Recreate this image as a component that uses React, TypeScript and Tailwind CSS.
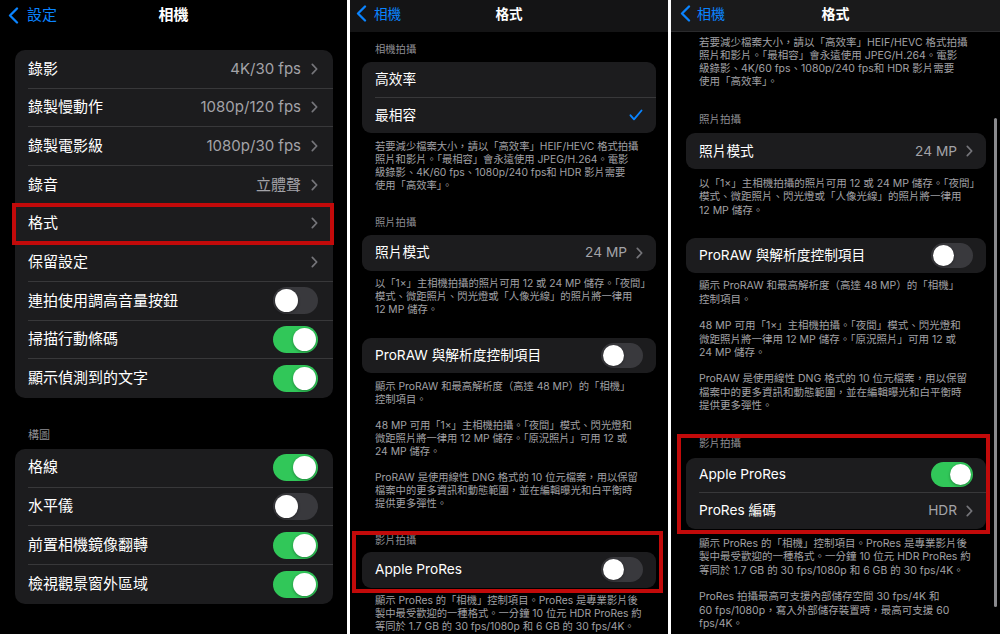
import clsx from "clsx";

type Size = "lg" | "md";

function Chevron() {
  return (
    <svg width="7" height="12" viewBox="0 0 7 12" fill="none" className="shrink-0">
      <path d="M1.3 1.3 5.7 6l-4.4 4.7" stroke="#75757a" strokeWidth="1.7" strokeLinecap="round" strokeLinejoin="round" />
    </svg>
  );
}

function BackChevron() {
  return (
    <svg width="11" height="17" viewBox="0 0 11 17" fill="none" className="shrink-0">
      <path d="M9 1.5 2 8.5l7 7" stroke="#0a84ff" strokeWidth="2.3" strokeLinecap="round" strokeLinejoin="round" />
    </svg>
  );
}

function Check() {
  return (
    <svg width="14" height="12" viewBox="0 0 14 12" fill="none" className="shrink-0">
      <path d="M1.5 6.3 5 10.3 12.5 1.5" stroke="#0a84ff" strokeWidth="1.9" strokeLinecap="round" strokeLinejoin="round" />
    </svg>
  );
}

function Toggle({ on, size }: { on: boolean; size: Size }) {
  return (
    <div
      className={clsx(
        "flex shrink-0 items-center rounded-full p-[2px]",
        on ? "justify-end bg-[#31c759]" : "justify-start bg-[#39393d]",
        size === "lg" ? "h-[27px] w-[45px]" : "h-[25px] w-[42px]"
      )}
    >
      <div
        className={clsx(
          "rounded-full bg-white shadow-[0_1px_3px_rgba(0,0,0,0.35)]",
          size === "lg" ? "h-[23px] w-[23px]" : "h-[21px] w-[21px]"
        )}
      />
    </div>
  );
}

type RowProps = {
  label: string;
  value?: string;
  chevron?: boolean;
  toggle?: boolean;
  check?: boolean;
  divider?: boolean;
  highlight?: boolean;
  size: Size;
};

function Row({ label, value, chevron, toggle, check, divider, highlight, size }: RowProps) {
  const lg = size === "lg";
  return (
    <div className="relative pl-[13px]">
      <div
        className={clsx(
          "flex items-center",
          lg ? "h-[38.67px] pr-[15px] text-[15px]" : "h-[35.5px] pr-[13px] text-[13.7px]",
          divider && "border-b border-[#38383a]"
        )}
      >
        <span className="flex-1 whitespace-nowrap text-white">{label}</span>
        {value && <span className="whitespace-nowrap text-[#a3a3a8]">{value}</span>}
        {chevron && <span className={lg ? "ml-[10px]" : "ml-[9px]"}><Chevron /></span>}
        {typeof toggle === "boolean" && <Toggle on={toggle} size={size} />}
        {check && <Check />}
      </div>
      {highlight && (
        <div className="pointer-events-none absolute -top-[2px] -bottom-[2px] -left-[3px] -right-[1px] border-4 border-[#c20a0a]" />
      )}
    </div>
  );
}

function Card({ rows, size }: { rows: Omit<RowProps, "size" | "divider">[]; size: Size }) {
  return (
    <div className={clsx("bg-[#1c1c1e]", size === "lg" ? "rounded-[10px]" : "rounded-[9px]")}>
      {rows.map((r, i) => (
        <Row key={r.label} {...r} size={size} divider={i < rows.length - 1} />
      ))}
    </div>
  );
}

function Lines({ lines, className }: { lines: string[]; className: string }) {
  return (
    <div className={clsx("pl-[13px] text-[#a0a0a5]", className)}>
      {lines.map((l, i) => (
        <div key={i} className="whitespace-nowrap">{l || "\u00a0"}</div>
      ))}
    </div>
  );
}

function NavBar({ back, title, variant }: { back: string; title: string; variant: 1 | 2 | 3 }) {
  return (
    <div
      className={clsx(
        "grid shrink-0 grid-cols-[1fr_auto_1fr] items-center",
        variant === 1 && "h-[30px] text-[15px]",
        variant === 2 && "h-[32px] bg-[#141415] pb-[4px] text-[13.6px]",
        variant === 3 && "h-[32px] border-b border-[#2a2a2c] bg-[#1a1a1b] pb-[4px] text-[14px]"
      )}
    >
      <div
        className={clsx(
          "flex items-center text-[#0a84ff]",
          variant === 1 && "gap-[8px] pl-[8px]",
          variant === 2 && "gap-[7px] pl-[6px]",
          variant === 3 && "gap-[6px] pl-[9px]"
        )}
      >
        <BackChevron />
        <span>{back}</span>
      </div>
      <div className="font-semibold text-white">{title}</div>
      <div />
    </div>
  );
}

const FORMAT_NOTE = [
  "若要減少檔案大小，請以「高效率」HEIF/HEVC 格式拍攝",
  "照片和影片。「最相容」會永遠使用 JPEG/H.264。電影",
  "級錄影、4K/60 fps、1080p/240 fps和 HDR 影片需要",
  "使用「高效率」。",
];

const PHOTO_NOTE = [
  "以「1×」主相機拍攝的照片可用 12 或 24 MP 儲存。「夜間」",
  "模式、微距照片、閃光燈或「人像光線」的照片將一律用",
  "12 MP 儲存。",
];

const PRORAW_NOTE = [
  "顯示 ProRAW 和最高解析度（高達 48 MP）的「相機」",
  "控制項目。",
  "",
  "48 MP 可用「1×」主相機拍攝。「夜間」模式、閃光燈和",
  "微距照片將一律用 12 MP 儲存。「原況照片」可用 12 或",
  "24 MP 儲存。",
  "",
  "ProRAW 是使用線性 DNG 格式的 10 位元檔案，用以保留",
  "檔案中的更多資訊和動態範圍，並在編輯曝光和白平衡時",
  "提供更多彈性。",
];

const PRORES_NOTE = [
  "顯示 ProRes 的「相機」控制項目。ProRes 是專業影片後",
  "製中最受歡迎的一種格式。一分鐘 10 位元 HDR ProRes 約",
  "等同於 1.7 GB 的 30 fps/1080p 和 6 GB 的 30 fps/4K。",
  "",
  "ProRes 拍攝最高可支援內部儲存空間 30 fps/4K 和",
  "60 fps/1080p，寫入外部儲存裝置時，最高可支援 60",
  "fps/4K。",
];

function CameraPanel() {
  return (
    <div className="flex w-[347px] shrink-0 flex-col overflow-hidden bg-black">
      <NavBar back="設定" title="相機" variant={1} />
      <div className="pl-[15px] pr-[14px] pt-[20px]">
        <Card
          size="lg"
          rows={[
            { label: "錄影", value: "4K/30 fps", chevron: true },
            { label: "錄製慢動作", value: "1080p/120 fps", chevron: true },
            { label: "錄製電影級", value: "1080p/30 fps", chevron: true },
            { label: "錄音", value: "立體聲", chevron: true },
            { label: "格式", chevron: true, highlight: true },
            { label: "保留設定", chevron: true },
            { label: "連拍使用調高音量按鈕", toggle: false },
            { label: "掃描行動條碼", toggle: true },
            { label: "顯示偵測到的文字", toggle: true },
          ]}
        />
        <div className="mb-[7px] mt-[30px] pl-[13px] text-[11px] leading-[14px] text-[#8e8e93]">構圖</div>
        <Card
          size="lg"
          rows={[
            { label: "格線", toggle: true },
            { label: "水平儀", toggle: false },
            { label: "前置相機鏡像翻轉", toggle: true },
            { label: "檢視觀景窗外區域", toggle: true },
          ]}
        />
      </div>
    </div>
  );
}

function FormatPanel() {
  return (
    <div className="flex w-[318px] shrink-0 flex-col overflow-hidden bg-black">
      <NavBar back="相機" title="格式" variant={2} />
      <div className="px-[12px] text-[10.3px] leading-[13px]">
        <div className="mb-[6.5px] mt-[10.5px] pl-[13px] text-[#8e8e93]">相機拍攝</div>
        <Card
          size="md"
          rows={[
            { label: "高效率" },
            { label: "最相容", check: true },
          ]}
        />
        <Lines lines={FORMAT_NOTE} className="pt-[6.5px]" />
        <div className="mb-[6px] mt-[24.5px] pl-[13px] text-[#8e8e93]">照片拍攝</div>
        <Card size="md" rows={[{ label: "照片模式", value: "24 MP", chevron: true }]} />
        <Lines lines={PHOTO_NOTE} className="pt-[6.5px]" />
        <div className="mt-[21.5px]">
          <Card size="md" rows={[{ label: "ProRAW 與解析度控制項目", toggle: false }]} />
        </div>
        <Lines lines={PRORAW_NOTE} className="pt-[6.5px]" />
        <div className="relative mt-[24px]">
          <div className="mb-[5.5px] pl-[13px] text-[#8e8e93]">影片拍攝</div>
          <Card size="md" rows={[{ label: "Apple ProRes", toggle: false }]} />
          <div className="pointer-events-none absolute -top-[2.5px] -bottom-[5.5px] -left-[10px] -right-[7px] border-4 border-[#c20a0a]" />
        </div>
        <Lines lines={PRORES_NOTE.slice(0, 3)} className="pt-[6.5px]" />
      </div>
    </div>
  );
}

function FormatScrolledPanel() {
  return (
    <div className="relative flex w-[329px] shrink-0 flex-col overflow-hidden bg-black">
      <NavBar back="相機" title="格式" variant={3} />
      <div className="pl-[15px] pr-[14px] text-[10.5px] leading-[13.3px]">
        <Lines lines={FORMAT_NOTE} className="pt-[3.5px]" />
        <div className="mb-[7.5px] mt-[24px] pl-[13px] text-[#8e8e93]">照片拍攝</div>
        <Card size="md" rows={[{ label: "照片模式", value: "24 MP", chevron: true }]} />
        <Lines lines={PHOTO_NOTE} className="pt-[8px]" />
        <div className="mt-[21px]">
          <Card size="md" rows={[{ label: "ProRAW 與解析度控制項目", toggle: false }]} />
        </div>
        <Lines lines={PRORAW_NOTE} className="pt-[6px]" />
        <div className="relative mt-[24.5px]">
          <div className="mb-[7.5px] pl-[13px] text-[#8e8e93]">影片拍攝</div>
          <Card
            size="md"
            rows={[
              { label: "Apple ProRes", toggle: true },
              { label: "ProRes 編碼", value: "HDR", chevron: true },
            ]}
          />
          <div className="pointer-events-none absolute -top-[3px] -bottom-[5px] -left-[9px] -right-[4px] border-4 border-[#c20a0a]" />
        </div>
        <Lines lines={PRORES_NOTE} className="pt-[8.5px]" />
      </div>
      {/* scroll indicator */}
      <div className="absolute right-[3px] top-[118px] h-[489px] w-[3px] rounded-full bg-[#8a8a8e]" />
    </div>
  );
}

export default function App() {
  return (
    <div className="flex h-[634px] w-[1000px] gap-[3px] overflow-hidden bg-white font-['Inter','Noto_Sans_CJK_TC',sans-serif] antialiased">
      <CameraPanel />
      <FormatPanel />
      <FormatScrolledPanel />
    </div>
  );
}
